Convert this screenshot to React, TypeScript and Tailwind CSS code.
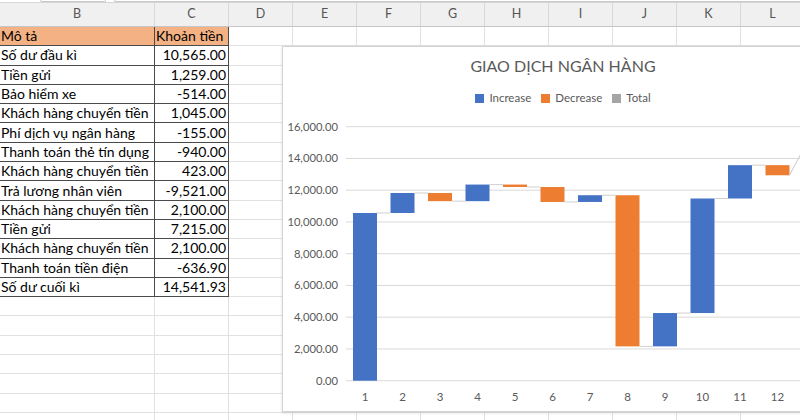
import React from "react"

const COLS = [
  { name: "B", w: 155 },
  { name: "C", w: 74 },
  { name: "D", w: 64 },
  { name: "E", w: 64 },
  { name: "F", w: 64 },
  { name: "G", w: 64 },
  { name: "H", w: 64 },
  { name: "I", w: 64 },
  { name: "J", w: 64 },
  { name: "K", w: 64 },
  { name: "L", w: 64 },
]

const ROWS: [string, string][] = [
  ["Số dư đầu kì", "10,565.00"],
  ["Tiền gửi", "1,259.00"],
  ["Bảo hiểm xe", "-514.00"],
  ["Khách hàng chuyển tiền", "1,045.00"],
  ["Phí dịch vụ ngân hàng", "-155.00"],
  ["Thanh toán thẻ tín dụng", "-940.00"],
  ["Khách hàng chuyển tiền", "423.00"],
  ["Trả lương nhân viên", "-9,521.00"],
  ["Khách hàng chuyển tiền", "2,100.00"],
  ["Tiền gửi", "7,215.00"],
  ["Khách hàng chuyển tiền", "2,100.00"],
  ["Thanh toán tiền điện", "-636.90"],
  ["Số dư cuối kì", "14,541.93"],
]

const STEPS = [10565, 1259, -514, 1045, -155, -940, 423, -9521, 2100, 7215, 2100, -636.9]
const TOTAL = 14541.93

// page coordinates of the plot
const Y0 = 380.7
const PX = 0.015875
const yOf = (v: number) => Y0 - v * PX
const cx = (i: number) => 365 + 37.5 * i
const BAR = 24

function Chart() {
  let run = 0
  const bars = STEPS.map((d, i) => {
    const from = run
    run += d
    return { i, from, to: run, up: d >= 0 }
  })

  return (
    <div className="absolute left-[282px] top-[46px] w-[562px] h-[366px] bg-white border border-[#d4d4d4] shadow-[0_1px_3px_rgba(0,0,0,0.12)] flex flex-col">
      <div className="h-[38px] flex items-center justify-center text-[16px] text-[#595959]">
        GIAO DỊCH NGÂN HÀNG
      </div>
      <div className="h-[26px] flex items-center justify-center gap-[10px] text-[11.5px] text-[#595959]">
        <span className="flex items-center gap-[5px]">
          <span className="w-[9px] h-[9px] bg-[#4472c4]" />
          Increase
        </span>
        <span className="flex items-center gap-[5px]">
          <span className="w-[9px] h-[9px] bg-[#ed7d31]" />
          Decrease
        </span>
        <span className="flex items-center gap-[5px]">
          <span className="w-[9px] h-[9px] bg-[#a5a5a5]" />
          Total
        </span>
      </div>
      <svg width={560} height={299} className="block">
        <g transform="translate(-283,-111)" fontFamily="Lato, sans-serif">
          {[0, 2000, 4000, 6000, 8000, 10000, 12000, 14000, 16000].map((v) => (
            <g key={v}>
              <line x1={346} x2={900} y1={yOf(v)} y2={yOf(v)} stroke="#d9d9d9" strokeWidth={1} />
              <text x={338} y={yOf(v) + 4} textAnchor="end" fontSize={11.2} fill="#595959">
                {v === 0 ? "0.00" : v.toLocaleString("en-US") + ".00"}
              </text>
            </g>
          ))}
          {bars.map((b) => {
            const top = yOf(Math.max(b.from, b.to))
            const bot = yOf(Math.min(b.from, b.to))
            return (
              <rect
                key={b.i}
                x={cx(b.i) - BAR / 2}
                y={top}
                width={BAR}
                height={Math.max(bot - top, 1.5)}
                fill={b.up ? "#4472c4" : "#ed7d31"}
              />
            )
          })}
          {bars.slice(0, -1).map((b) => (
            <line
              key={b.i}
              x1={cx(b.i) + BAR / 2}
              x2={cx(b.i + 1) - BAR / 2}
              y1={yOf(b.to)}
              y2={yOf(b.to)}
              stroke="#d0d0d0"
              strokeWidth={1}
            />
          ))}
          <line x1={cx(11) + BAR / 2} y1={yOf(run)} x2={cx(12) - BAR / 2} y2={yOf(TOTAL)} stroke="#c8c8c8" strokeWidth={1} />
          <rect x={cx(12) - BAR / 2} y={yOf(TOTAL)} width={BAR} height={Y0 - yOf(TOTAL)} fill="#a5a5a5" />
          {STEPS.map((_, i) => (
            <text key={i} x={cx(i)} y={401} textAnchor="middle" fontSize={11.5} fill="#595959">
              {i + 1}
            </text>
          ))}
        </g>
      </svg>
    </div>
  )
}

export default function App() {
  const bodyRows = 21
  return (
    <div className="relative w-[800px] h-[420px] overflow-hidden bg-white font-['Lato',sans-serif] text-black">
      {/* name box / formula bar remnants */}
      <div className="h-[3px] flex border-b border-[#d6d6d6] bg-white">
        <div className="w-[40px]" />
        <div className="w-[66px] border-x border-b border-[#c8c8c8] rounded-b-[3px]" />
        <div className="w-[8px]" />
        <div className="flex-1 border-l border-b border-[#c8c8c8] rounded-bl-[3px]" />
      </div>
      {/* column headers */}
      <div className="flex h-[24px] bg-[#f0f0f0] border-b border-[#c6c6c6]">
        {COLS.map((c) => (
          <div
            key={c.name}
            style={{ width: c.w }}
            className="shrink-0 flex items-center justify-center border-r border-[#d9d9d9] text-[12.5px] text-[#555]"
          >
            {c.name}
          </div>
        ))}
        <div className="flex-1" />
      </div>
      {/* rows */}
      <div className="flex flex-col">
        {Array.from({ length: bodyRows }).map((_, r) => {
          const isHead = r === 0
          const data = r >= 1 && r <= ROWS.length ? ROWS[r - 1] : null
          const inTable = r <= ROWS.length
          return (
            <div key={r} className="flex h-[19.3px]">
              {COLS.map((c, ci) => {
                const table = inTable && ci < 2
                let text = ""
                if (isHead) text = ci === 0 ? "Mô tả" : ci === 1 ? "Khoản tiền" : ""
                else if (data && ci < 2) text = data[ci]
                return (
                  <div
                    key={c.name}
                    style={{ width: c.w }}
                    className={
                      "shrink-0 flex items-center overflow-hidden whitespace-nowrap text-[14px] leading-none border-r border-b " +
                      (table ? "border-[#4a4a4a] " : "border-[#e1e1e1] ") +
                      (isHead && ci < 2 ? "bg-[#f4b183] " : "") +
                      (ci === 1 && !isHead ? "justify-end pr-[2px] " : "pl-[1px] ")
                    }
                  >
                    {text}
                  </div>
                )
              })}
              <div className="flex-1 border-b border-[#e1e1e1]" />
            </div>
          )
        })}
      </div>
      <Chart />
    </div>
  )
}
